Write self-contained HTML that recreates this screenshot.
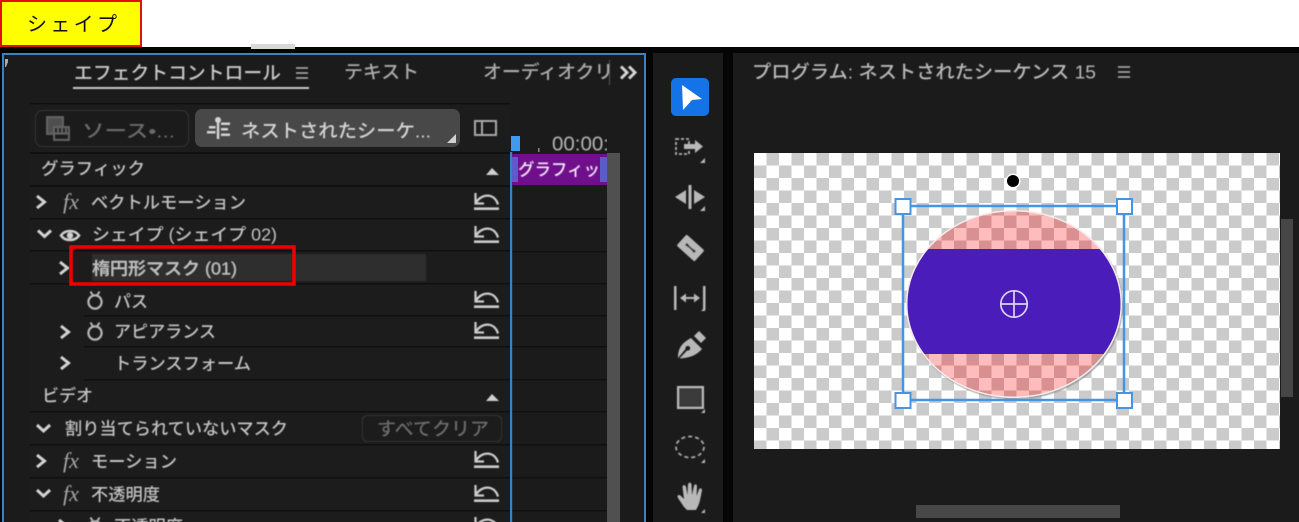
<!DOCTYPE html>
<html lang="ja"><head><meta charset="utf-8"><title>シェイプ</title>
<style>
html,body{margin:0;padding:0;background:#fff;width:1299px;height:522px;overflow:hidden}
svg{display:block}
text{font-family:"Liberation Sans","Noto Sans CJK JP",sans-serif;fill:#c2c2c2;font-size:17.2px;font-weight:500}
.t{font-size:18.7px;fill:#c8c8c8}
.d{fill:#6a6a6a}
</style></head><body>
<svg width="1299" height="522" viewBox="0 0 1299 522" xmlns="http://www.w3.org/2000/svg">
<defs>
<pattern id="ck" x="754" y="153" width="25" height="25" patternUnits="userSpaceOnUse">
<rect width="25" height="25" fill="#fff"/><rect x="12.5" width="12.5" height="12.5" fill="#cbcbcb"/><rect y="12.5" width="12.5" height="12.5" fill="#cbcbcb"/>
</pattern>
<pattern id="ckp" x="754" y="153" width="25" height="25" patternUnits="userSpaceOnUse">
<rect width="25" height="25" fill="#ffbcbc"/><rect x="12.5" width="12.5" height="12.5" fill="#d89090"/><rect y="12.5" width="12.5" height="12.5" fill="#d89090"/>
</pattern>
<clipPath id="el"><ellipse cx="1014" cy="304" rx="106.500" ry="92.500"/></clipPath>
<clipPath id="tabclip"><rect x="470" y="55" width="139" height="40"/></clipPath>
<clipPath id="timeclip"><rect x="530" y="125" width="77" height="28"/></clipPath>
<filter id="b" x="-5%" y="-5%" width="110%" height="110%"><feGaussianBlur stdDeviation="0.4"/></filter>
<g id="rs" fill="none" stroke="#cccccc"><path d="M1.500 0V10.500H10" stroke-width="2.200"/><path d="M2 9.500C7 1 20 -1 24 11.500" stroke-width="2.300"/><path d="M0 15.700H25" stroke-width="2.600"/></g>
<path id="cr" d="M0 0L7.500 6L0 12" fill="none" stroke="#d4d4d4" stroke-width="3"/>
<path id="cd" d="M0 0L6.500 6L13 0" fill="none" stroke="#d4d4d4" stroke-width="3"/>
<g id="fx"><text x="0" y="0" style="font-family:'Liberation Serif',serif;font-style:italic;font-size:22px;font-weight:400;fill:#a8a8a8">fx</text></g>
<g id="sw" fill="none" stroke="#b8b8b8"><circle cx="0" cy="0" r="6.600" stroke-width="2.200"/><path d="M-4.500 -10.500L-2 -6.500M4.500 -10.500L2 -6.500" stroke-width="2"/></g>
</defs>

<rect width="1299" height="522" fill="#fff"/>
<rect y="47" width="1299" height="475" fill="#050505"/>
<rect x="251" y="44" width="44" height="5" fill="#d8d8d8"/>

<!-- left panel -->
<rect x="3" y="54" width="642" height="470" fill="#1b1b1b" stroke="#3f7fc4" stroke-width="2"/>
<path d="M5 59h3v3l-2 5h-1z" fill="#aaa"/>

<g filter="url(#b)">
<text class="t" x="74" y="79.500" textLength="207" lengthAdjust="spacingAndGlyphs">エフェクトコントロール</text>
<path d="M296 68H308M296 73H308M296 78H308" stroke="#b5b5b5" stroke-width="1.500"/>
<rect x="73" y="87" width="236" height="2" fill="#c9c9c9"/>
<text class="t" x="344" y="78.500" textLength="75" lengthAdjust="spacingAndGlyphs" style="fill:#ababab">テキスト</text>
<g clip-path="url(#tabclip)"><text class="t" x="483" y="78.500" textLength="168" lengthAdjust="spacingAndGlyphs" style="fill:#ababab">オーディオクリップ</text></g>
<rect x="609" y="60" width="1" height="25" fill="#555"/>
<path d="M621 66.500L627 72.500L621 78.500M629 66.500L635 72.500L629 78.500" fill="none" stroke="#d4d4d4" stroke-width="3"/>
</g>

<!-- inner effect panel -->
<rect x="30" y="103" width="480" height="419" fill="#1c1c1c"/>
<rect x="30" y="103" width="480" height="1.500" fill="#111"/>
<g fill="#101010">
<rect x="30" y="152" width="480" height="2"/><rect x="30" y="185" width="480" height="2"/><rect x="30" y="218" width="480" height="1.500"/><rect x="30" y="250" width="480" height="1.500"/><rect x="30" y="283" width="480" height="1.500"/><rect x="84" y="315" width="426" height="1.500"/><rect x="84" y="346" width="426" height="1.500"/><rect x="84" y="379" width="426" height="1.500"/><rect x="30" y="411" width="480" height="1.500"/><rect x="30" y="444" width="480" height="1.500"/><rect x="30" y="477" width="480" height="1.500"/><rect x="30" y="510" width="480" height="1.500"/>
<rect x="512" y="218" width="95" height="1.500"/><rect x="512" y="251" width="95" height="1.500"/><rect x="512" y="283" width="95" height="1.500"/><rect x="512" y="315" width="95" height="1.500"/><rect x="512" y="346" width="95" height="1.500"/><rect x="512" y="379" width="95" height="1.500"/><rect x="512" y="411" width="95" height="1.500"/><rect x="512" y="444" width="95" height="1.500"/><rect x="512" y="477" width="95" height="1.500"/><rect x="512" y="510" width="95" height="1.500"/>
</g>

<!-- buttons -->
<rect x="35.500" y="110.500" width="153" height="36" rx="7" fill="#1b1b1b" stroke="#2b2b2b" stroke-width="1.500"/>
<rect x="195" y="109" width="265" height="38" rx="7" fill="#484848"/>
<path d="M447 143H456V134Z" fill="#d0d0d0"/>

<g filter="url(#b)">
<!-- source icon -->
<g fill="none" stroke="#666" stroke-width="1.800"><rect x="47" y="117" width="16" height="17" fill="#505050"/><rect x="54" y="127" width="15" height="13" fill="#1c1c1c"/><path d="M54 133.500H69M58 128V133M62 128V133M66 128V133"/></g>
<text x="82" y="137.500" textLength="93" lengthAdjust="spacingAndGlyphs" class="d" style="font-size:18.700px">ソース•...</text>
<!-- nest icon -->
<g fill="#d4d4d4"><rect x="216.800" y="119" width="2.500" height="20"/><circle cx="218" cy="120" r="3"/><rect x="209" y="126" width="6.500" height="2.500"/><rect x="207" y="131" width="8.500" height="2.500"/><rect x="221" y="122.500" width="9" height="2.500"/><rect x="221" y="128" width="7" height="2.500"/><rect x="221" y="133.500" width="9" height="2.500"/></g>
<text x="241" y="137.500" textLength="190" lengthAdjust="spacingAndGlyphs" style="font-size:18.700px;fill:#d4d4d4">ネストされたシーケ...</text>
<!-- panel icon -->
<rect x="475" y="121" width="21" height="14" fill="none" stroke="#a8a8a8" stroke-width="2"/><rect x="481" y="121" width="2" height="14" fill="#a8a8a8"/>

<text x="41" y="174.500" textLength="104" lengthAdjust="spacingAndGlyphs">グラフィック</text>
<path d="M486 175L492 168L499 175Z" fill="#cfcfcf"/>
<!-- row1 -->
<use href="#cr" x="37" y="196"/><use href="#fx" x="63" y="209"/>
<text x="91" y="208.500" textLength="155" lengthAdjust="spacingAndGlyphs">ベクトルモーション</text>
<use href="#rs" x="474" y="193"/>
<!-- row2 -->
<use href="#cd" x="38" y="230.500"/>
<path d="M61 235.500C65 229.500 75 229.500 79 235.500C75 241.500 65 241.500 61 235.500Z" fill="none" stroke="#cfcfcf" stroke-width="2.600"/><circle cx="70" cy="235.500" r="3.200" fill="#cfcfcf"/>
<text x="92" y="240.500" textLength="185" lengthAdjust="spacingAndGlyphs">シェイプ (シェイプ 02)</text>
<use href="#rs" x="474" y="226"/>
<!-- row3 -->
<rect x="92" y="254" width="334" height="27" fill="#2e2e2e"/>
<use href="#cr" x="60" y="262"/>
<text x="92" y="274.500" textLength="145" lengthAdjust="spacingAndGlyphs">楕円形マスク (01)</text>
<!-- row4 -->
<use href="#sw" x="95" y="302"/>
<text x="114" y="307.500" textLength="34" lengthAdjust="spacingAndGlyphs">パス</text>
<use href="#rs" x="474" y="291"/>
<!-- row5 -->
<use href="#cr" x="61" y="326"/><use href="#sw" x="95" y="333"/>
<text x="114" y="337.500" textLength="102" lengthAdjust="spacingAndGlyphs">アピアランス</text>
<use href="#rs" x="474" y="322"/>
<!-- row6 -->
<use href="#cr" x="61" y="357"/>
<text x="114" y="369.500" textLength="137" lengthAdjust="spacingAndGlyphs">トランスフォーム</text>
<!-- video -->
<text x="42" y="401.500" textLength="51" lengthAdjust="spacingAndGlyphs">ビデオ</text>
<path d="M486 401L492 394L499 401Z" fill="#cfcfcf"/>
<!-- row7 -->
<use href="#cd" x="37" y="425"/>
<text x="65" y="434.500" textLength="223" lengthAdjust="spacingAndGlyphs">割り当てられていないマスク</text>
<rect x="362.500" y="415.500" width="139" height="26" rx="5" fill="none" stroke="#2e2e2e" stroke-width="1.500"/>
<text x="377" y="435.500" textLength="112" lengthAdjust="spacingAndGlyphs" class="d" style="font-size:18.700px">すべてクリア</text>
<!-- row8 -->
<use href="#cr" x="37" y="455"/><use href="#fx" x="63" y="468"/>
<text x="91" y="467.500" textLength="86" lengthAdjust="spacingAndGlyphs">モーション</text>
<use href="#rs" x="474" y="451"/>
<!-- row9 -->
<use href="#cd" x="37" y="490"/><use href="#fx" x="63" y="501"/>
<text x="91" y="500.500" textLength="69" lengthAdjust="spacingAndGlyphs">不透明度</text>
<use href="#rs" x="474" y="485"/>
<!-- row10 -->
<use href="#cr" x="59" y="520"/><use href="#sw" x="95" y="528"/>
<text x="114" y="532.500" textLength="69" lengthAdjust="spacingAndGlyphs">不透明度</text>
<use href="#rs" x="474" y="517"/>
</g>

<!-- red highlight -->
<rect x="71" y="247" width="223" height="37" fill="none" stroke="#ee0000" stroke-width="3.500"/>

<!-- timeline side -->
<rect x="510" y="152" width="2.200" height="370" fill="#3f7fc4"/>
<rect x="511" y="136" width="9" height="15" fill="#3f9bf0"/>
<rect x="538" y="148" width="1.500" height="4" fill="#888"/>
<g clip-path="url(#timeclip)" filter="url(#b)"><text x="552" y="150.500" style="font-size:20.500px;font-weight:400;fill:#b5b5b5">00:00:0</text></g>
<rect x="512" y="154" width="95" height="31" fill="#6f0f8c"/>
<rect x="512" y="157" width="6" height="25" fill="#5a5ccb"/><rect x="600" y="157" width="7" height="25" fill="#5a5ccb"/>
<text x="518" y="175.500" textLength="82" lengthAdjust="spacingAndGlyphs" style="font-size:17px;fill:#f4e8f6" filter="url(#b)">グラフィッ</text>
<rect x="607" y="153" width="13" height="369" fill="#505050"/>

<!-- tools -->
<rect x="653" y="53" width="70" height="469" fill="#1b1b1b"/>
<rect x="671" y="78" width="38" height="38" rx="5" fill="#1473e6"/>
<path d="M682 85L702 99L692 100L683 110Z" fill="#fff"/>
<g filter="url(#b)">
<g fill="#b8b8b8">
<!-- track select -->
<rect x="676" y="139" width="13" height="15" fill="none" stroke="#b0b0b0" stroke-width="1.800" stroke-dasharray="3 2"/>
<path d="M684 144H695V140L703 146.500L695 153V149H684Z"/>
<path d="M700 163H705V158Z"/>
<!-- ripple -->
<rect x="688.500" y="185" width="3" height="24"/><path d="M675 197L686 190V204Z"/><path d="M705 197L694 190V204Z"/>
<path d="M700 211H705V206Z"/>
<!-- razor -->
<g transform="translate(690.500 248) rotate(42)"><rect x="-12" y="-7.500" width="24" height="15" rx="1.500"/><path d="M-6 -1.500L-2 -0.800H2L6 -1.500V1.500L2 0.800H-2L-6 1.500Z" fill="#1b1b1b"/></g>
<!-- slip -->
<rect x="674" y="286" width="2.500" height="24"/><rect x="703" y="286" width="2.500" height="24"/><path d="M680 298L686 293.500V297H694V293.500L700 298L694 302.500V299H686V302.500Z"/>
<path d="M701 311H705V307Z"/>
<!-- pen -->
<path d="M678 358C678 350 680 344 691 338L702 349C696 356 688 358 679.500 358.500L687 350.500A2.400 2.400 0 1 0 685.500 349Z"/>
<path d="M694 336L699 331L706 338L701 343Z"/>
<!-- rect -->
<rect x="678" y="387" width="25" height="21" fill="#3a3a3a" stroke="#bcbcbc" stroke-width="2"/>
<path d="M701 413H705V409Z"/>
<!-- ellipse -->
<ellipse cx="690" cy="447" rx="14" ry="10.500" fill="none" stroke="#a9a9a9" stroke-width="1.800" stroke-dasharray="4 3"/>
<path d="M701 463H705V459Z"/>
<!-- hand -->
<path d="M684 507L678 498C676.500 495 679 494 681 496L684 499L682.500 487C682.500 484.500 685.500 484.500 686 487L687.500 495L688 484.500C688.500 482 691 482 691.500 484.500L692 495L694 486C694.500 483.500 697 484 697 486.500L696.500 496L699 489.500C700 487.500 702 488 702 490.500L700 500C699 505 697.500 507 696 510H687Z"/>
<path d="M701 513H705V509Z"/>
</g>
</g>

<!-- program panel -->
<rect x="733" y="53" width="566" height="469" fill="#1b1b1b"/>
<g filter="url(#b)">
<text class="t" x="752" y="78.500" textLength="344" lengthAdjust="spacingAndGlyphs" style="fill:#b8b8b8">プログラム: ネストされたシーケンス 15</text>
<path d="M1118 67H1130M1118 72H1130M1118 77H1130" stroke="#b5b5b5" stroke-width="1.500"/>
</g>
<rect x="1281" y="219" width="12" height="178" fill="#464646"/>
<rect x="916" y="505" width="204" height="13" fill="#484848"/>

<!-- canvas -->
<rect x="754" y="153" width="526" height="296" fill="url(#ck)"/>
<ellipse cx="1015" cy="305.500" rx="108" ry="94" fill="#8d8d8d" opacity=".7" filter="url(#b)"/>
<ellipse cx="1014" cy="304" rx="108" ry="94" fill="#f2eded"/>
<g clip-path="url(#el)">
<rect x="900" y="205" width="230" height="200" fill="url(#ckp)"/>
<rect x="900" y="249" width="230" height="105" fill="#4a1dbb"/>
</g>
<g fill="none" stroke="#dcd4f4" stroke-width="1.700"><circle cx="1014" cy="304" r="13.200"/><path d="M1001 304H1027M1014 291V317"/></g>
<circle cx="1013" cy="181" r="7.500" fill="#fff"/><circle cx="1013" cy="181" r="6" fill="#000"/>
<rect x="903" y="206" width="221" height="194" fill="none" stroke="#4595e6" stroke-width="2.500"/>
<g fill="#fff" stroke="#4595e6" stroke-width="2">
<rect x="895.500" y="199" width="15" height="15"/><rect x="1117" y="199" width="15" height="15"/><rect x="895.500" y="393" width="15" height="15"/><rect x="1117" y="393" width="15" height="15"/>
</g>

<!-- tooltip -->
<rect x="1" y="1" width="140" height="45" fill="#ffff00" stroke="#e01010" stroke-width="2"/>
<text x="27" y="31" textLength="90" lengthAdjust="spacing" style="font-size:20px;font-weight:400;fill:#111">シェイプ</text>
</svg>
</body></html>
